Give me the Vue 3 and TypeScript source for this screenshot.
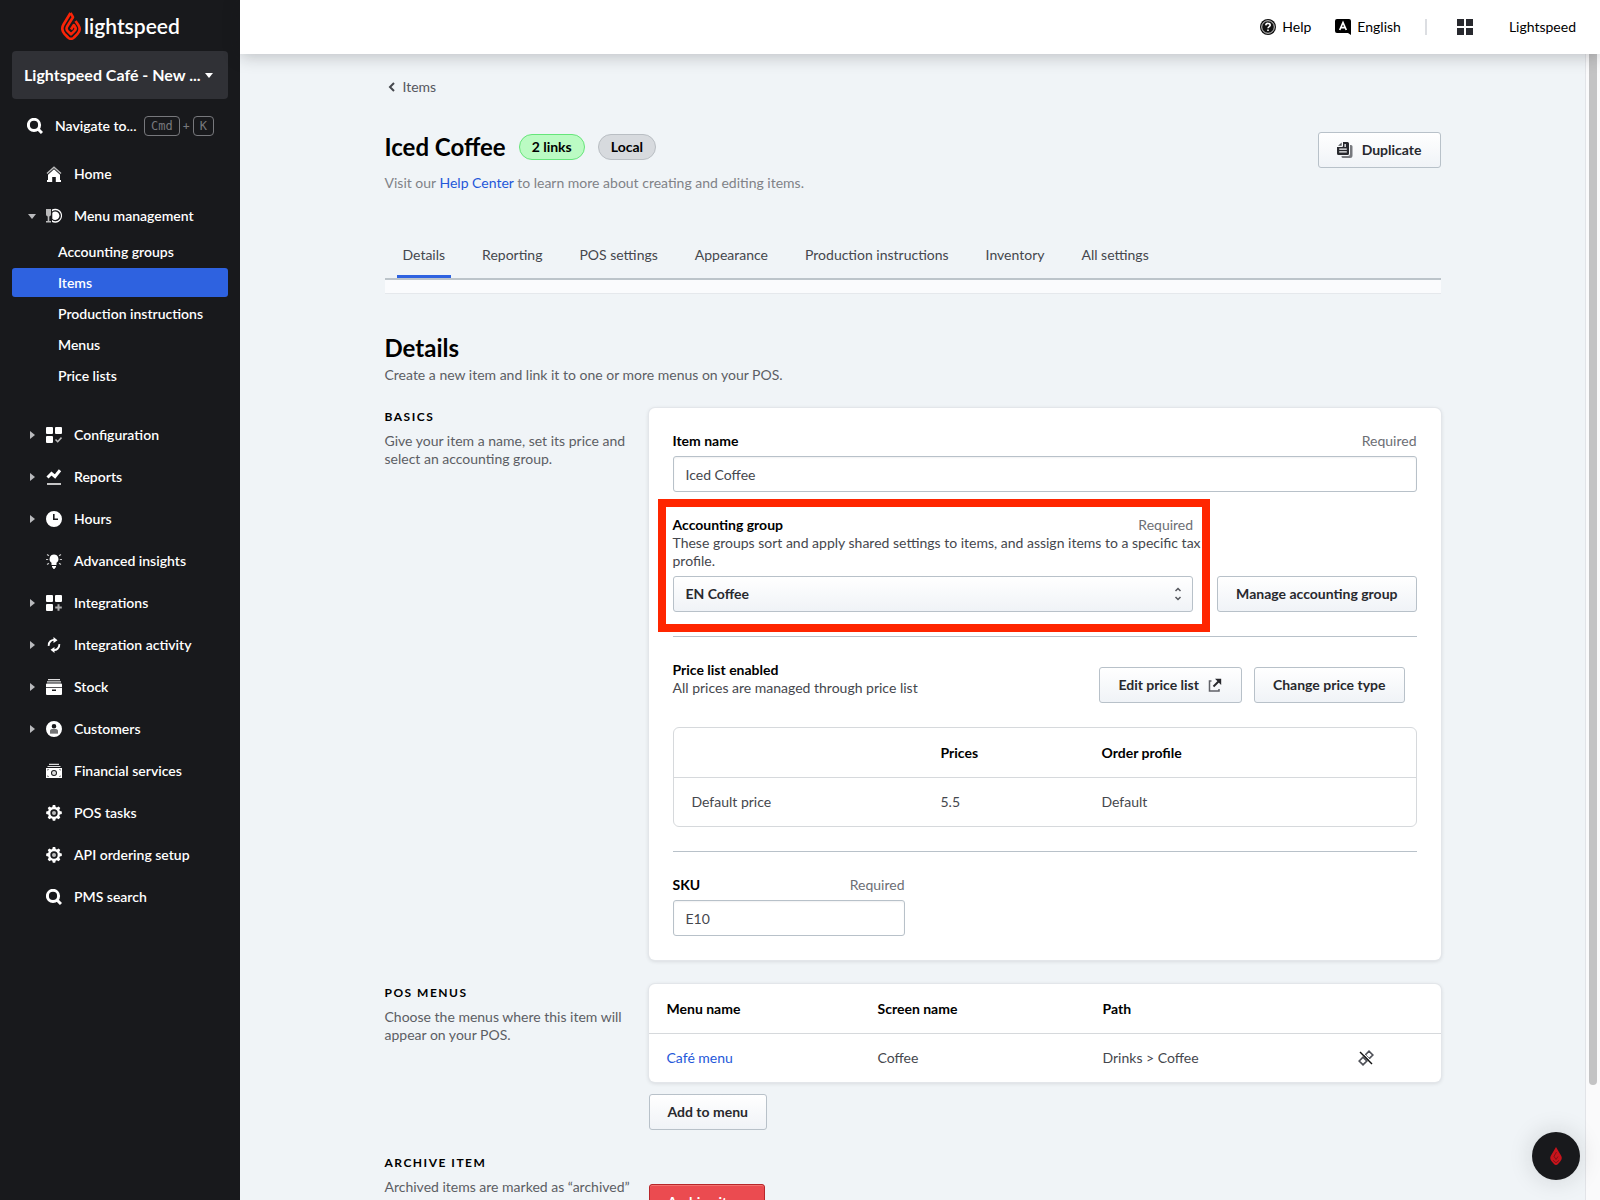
<script setup lang="ts">
import { ref } from 'vue'

interface Shape { d: string; o?: number; s?: number }
interface NavItem { label: string; icon: string; arrow?: 'open' | 'closed'; children?: string[] }

const gear = 'M6.8 0h2.4l.5 1.9 1.2.5 1.7-1 1.7 1.7-1 1.7.5 1.2 2 .6v2.4l-2 .5-.5 1.3 1 1.7-1.7 1.7-1.7-1-1.2.5-.5 2H6.800l-.5-2-1.200-.5-1.700 1-1.700-1.700 1-1.700-.5-1.300-2-.5V6.600l2-.6.5-1.200-1-1.700 1.700-1.700 1.700 1 1.200-.5zM8 4.300a3.700 3.700 0 1 0 0 7.400 3.700 3.700 0 0 0 0-7.400z'
const tiles = 'M1 0h5a1 1 0 0 1 1 1v5a1 1 0 0 1-1 1H1a1 1 0 0 1-1-1V1a1 1 0 0 1 1-1zM10 0h5a1 1 0 0 1 1 1v5a1 1 0 0 1-1 1h-5a1 1 0 0 1-1-1V1a1 1 0 0 1 1-1zM1 9h5a1 1 0 0 1 1 1v5a1 1 0 0 1-1 1H1a1 1 0 0 1-1-1v-5a1 1 0 0 1 1-1z'

const icons: Record<string, Shape[]> = {
  search: [{ d: 'M7 1.300a5.600 5.600 0 1 0 0 11.200A5.600 5.600 0 0 0 7 1.300zM11 11l4 4', s: 3 }],
  home: [
    { d: 'M1 7.500 8 1.200l7 6.300', s: 1.500, o: 0.7 },
    { d: 'M8 3.200 14 8.800V14h1v2H9.800v-5H6.200v5H1v-2h1V8.800z' },
  ],
  menu: [
    { d: 'M0 1h5v5.500a2 2 0 0 1-1.700 2V13H5v1.500H0V13h1.700V8.500A2 2 0 0 1 0 6.500z', o: 0.7 },
    { d: 'M6 1.400A7 7 0 1 1 6 14v-2a5.500 5.500 0 1 0 0-8.600z' },
    { d: 'M9.300 3.500a4.200 4.200 0 1 1-3 7.200V4.800a4.200 4.200 0 0 1 3-1.300z' },
  ],
  config: [{ d: tiles }, { d: 'M9.500 12.500l2.200 2.200 3.800-4.200', s: 1.600, o: 0.7 }],
  reports: [{ d: 'M1.500 8.500 5.500 4.500 9 7.500 14 1.200', s: 3 }, { d: 'M1 14h14v2H1z', o: 0.75 }],
  clock: [{ d: 'M8 0a8 8 0 1 1 0 16A8 8 0 0 1 8 0zM7 3v6h5V7.500H8.600V3z' }],
  bulb: [
    { d: 'M8 1.500a4.500 4.500 0 0 1 2.500 8.200V12h-5V9.700A4.500 4.500 0 0 1 8 1.500zM6 13h4v1.500H9.300L8.500 16h-1l-.8-1.500H6z' },
    { d: 'M0 6.500h2.200M13.800 6.500H16M1 1.500l2 1.300M15 1.500l-2 1.300M1 11.500l2-1.300M15 11.500l-2-1.300', s: 1.200, o: 0.75 },
  ],
  plus: [{ d: tiles }, { d: 'M12.500 9.200v6.600M9.200 12.500h6.600', s: 2, o: 0.65 }],
  sync: [
    { d: 'M2.700 8.800A5.300 5.300 0 0 1 9 3M13.300 7.200A5.300 5.300 0 0 1 7 13', s: 1.900 },
    { d: 'M7.500 0 11.500 3.200 7.500 6zM8.500 10 4.500 12.800 8.500 16z' },
  ],
  stock: [
    { d: 'M2 0h12v1.200H2zM1 2.200h14v1.200H1z', o: 0.85 },
    { d: 'M1 4.400h14a1 1 0 0 1 1 1V8H0V5.400a1 1 0 0 1 1-1zM0 8.700h16V15a1 1 0 0 1-1 1H1a1 1 0 0 1-1-1zM6 10.500V12h4v-1.500z' },
  ],
  customer: [
    { d: 'M8 0a8 8 0 1 1 0 16A8 8 0 0 1 8 0zM8 3a2.300 2.300 0 1 0 0 4.600A2.300 2.300 0 0 0 8 3zM4 12.500h8V10.500A2.500 2.500 0 0 0 9.500 8h-3A2.500 2.500 0 0 0 4 10.500z' },
    { d: 'M4 12.500h8V10.500A2.500 2.500 0 0 0 9.500 8h-3A2.500 2.500 0 0 0 4 10.500z', o: 0.4 },
  ],
  money: [
    { d: 'M3 .8h10V2H3zM1.500 3h13v1H1.500z', o: 0.85 },
    { d: 'M0 5h16v10H0zM8 7a3 3 0 1 0 0 6 3 3 0 0 0 0-6zM1.500 6.300v1.500L3 6.300zM14.500 6.300v1.500L13 6.300zM1.500 13.700v-1.500L3 13.700zM14.500 13.700v-1.500L13 13.700z' },
    { d: 'M8 8a2 2 0 1 0 0 4 2 2 0 0 0 0-4z', o: 0.85 },
  ],
  gear: [{ d: gear }, { d: 'M8 6a2 2 0 1 0 0 4 2 2 0 0 0 0-4z', o: 0.7 }],
}

const nav: NavItem[] = [
  { label: 'Home', icon: 'home' },
  { label: 'Menu management', icon: 'menu', arrow: 'open', children: ['Accounting groups', 'Items', 'Production instructions', 'Menus', 'Price lists'] },
  { label: 'Configuration', icon: 'config', arrow: 'closed' },
  { label: 'Reports', icon: 'reports', arrow: 'closed' },
  { label: 'Hours', icon: 'clock', arrow: 'closed' },
  { label: 'Advanced insights', icon: 'bulb' },
  { label: 'Integrations', icon: 'plus', arrow: 'closed' },
  { label: 'Integration activity', icon: 'sync', arrow: 'closed' },
  { label: 'Stock', icon: 'stock', arrow: 'closed' },
  { label: 'Customers', icon: 'customer', arrow: 'closed' },
  { label: 'Financial services', icon: 'money' },
  { label: 'POS tasks', icon: 'gear' },
  { label: 'API ordering setup', icon: 'gear' },
  { label: 'PMS search', icon: 'search' },
]

const tabs = ['Details', 'Reporting', 'POS settings', 'Appearance', 'Production instructions', 'Inventory', 'All settings']
const activeTab = ref('Details')
const itemName = ref('Iced Coffee')
const group = ref('EN Coffee')
const sku = ref('E10')
</script>

<template>
  <div class="app">
    <aside class="sidebar">
      <a href="#" class="logo">
        <svg class="flame" viewBox="0 0 20 28" aria-hidden="true">
          <path d="M9.500 1 2.500 12.500a8 8 0 0 0 1 9.300l3.500 3.700a4 4 0 0 0 6 0l3.500-3.700a7 7 0 0 0 1-8.500L14.500 9" />
          <path d="M9.500 1 12 5.200 6 14.800a3.500 3.500 0 0 0 .5 4L10 22.300l3.500-3.500a3 3 0 0 0 .5-4L12.800 13 10 17.500" />
        </svg>
        <span>lightspeed</span>
      </a>
      <button class="store"><span>Lightspeed Café - New ...</span><i class="caret down"></i></button>
      <a href="#" class="quick">
        <svg class="ico" viewBox="0 0 16 16"><path v-for="(p, i) in icons.search" :key="i" :d="p.d" class="line" :stroke-width="p.s" /></svg>
        <span class="quick-label">Navigate to...</span>
        <kbd>Cmd</kbd><span class="join">+</span><kbd>K</kbd>
      </a>
      <nav>
        <template v-for="item in nav" :key="item.label">
          <a href="#" class="nav-item">
            <span class="arrow"><i v-if="item.arrow" class="caret" :class="item.arrow === 'open' ? 'down dim' : 'side'"></i></span>
            <svg class="ico" viewBox="0 0 16 16">
              <path
                v-for="(p, i) in icons[item.icon]"
                :key="i"
                :d="p.d"
                :class="p.s ? 'line' : 'solid'"
                :stroke-width="p.s"
                :opacity="p.o"
              />
            </svg>
            <span>{{ item.label }}</span>
          </a>
          <div v-if="item.children" class="sub">
            <a v-for="c in item.children" :key="c" href="#" :class="{ active: c === 'Items' }">{{ c }}</a>
          </div>
        </template>
      </nav>
    </aside>

    <div class="main">
      <header class="topbar">
        <a href="#" class="top-link">
          <svg class="ico" viewBox="0 0 16 16">
            <circle cx="8" cy="8" r="8" fill="#111" />
            <circle cx="8" cy="8" r="6.300" fill="none" stroke="#fff" stroke-width=".8" />
            <path d="M5.800 6.300A2.100 2.100 0 0 1 8 4.400c1.300 0 2.200.7 2.200 1.800C10.200 7.600 8 7.600 8 9.300M8 10.400v1.700" fill="none" stroke="#fff" stroke-width="1.600" />
          </svg>
          Help
        </a>
        <a href="#" class="top-link lang">
          <svg class="ico" viewBox="0 0 16 16">
            <path d="M2 0h12a2 2 0 0 1 2 2v14l-3-2H2a2 2 0 0 1-2-2V2a2 2 0 0 1 2-2z" fill="#000" />
            <path d="M4.700 11 8 3.500 11.300 11M5.800 8.700h4.400" fill="none" stroke="#fff" stroke-width="1.700" />
          </svg>
          English
        </a>
        <span class="rule"></span>
        <button class="apps" aria-label="Apps">
          <svg class="ico" viewBox="0 0 16 16"><path d="M0 0h7v7H0zM9 0h7v7H9zM0 9h7v7H0zM9 9h7v7H9z" fill="#28292e" /></svg>
        </button>
        <a href="#" class="top-link">Lightspeed</a>
      </header>

      <div class="scroller">
        <main class="content">
          <div class="page">
            <a href="#" class="back">
              <svg viewBox="0 0 8 10"><path d="M6 1 2 5l4 4" /></svg>Items
            </a>
            <div class="head">
              <div>
                <div class="title">
                  <h1>Iced Coffee</h1>
                  <span class="badge green">2 links</span>
                  <span class="badge">Local</span>
                </div>
                <p class="intro">Visit our <a href="#">Help Center</a> to learn more about creating and editing items.</p>
              </div>
              <button class="btn">
                <svg class="ico" viewBox="0 0 16 16">
                  <path d="M12 3h2a1.500 1.500 0 0 1 1.500 1.500v9A2.500 2.500 0 0 1 13 16H6a1.500 1.500 0 0 1-1.500-1.500V14H11a2 2 0 0 0 2-2V3z" fill="#77797e" />
                  <path d="M6 0h4.500A1.500 1.500 0 0 1 12 1.500v10a1.500 1.500 0 0 1-1.500 1.500h-9A1.500 1.500 0 0 1 0 11.500V5h5a1 1 0 0 0 1-1zM7.500 2v3h1.300V2zM2.200 6.600v1.200h7.600V6.600zM2.200 9.300v1.200h7.600V9.300z" fill="#28292e" fill-rule="evenodd" />
                  <path d="M4.700.5V3.700H1z" fill="#55575c" />
                </svg>
                Duplicate
              </button>
            </div>

            <div class="tabs" role="tablist">
              <button v-for="t in tabs" :key="t" role="tab" :aria-selected="t === activeTab" :class="{ on: t === activeTab }" @click="activeTab = t">{{ t }}</button>
            </div>
            <div class="strip"></div>

            <h2>Details</h2>
            <p class="lead">Create a new item and link it to one or more menus on your POS.</p>

            <section class="row">
              <div class="side-text">
                <h3>Basics</h3>
                <p>Give your item a name, set its price and select an accounting group.</p>
              </div>
              <div class="card body">
                <div class="label-row"><label for="name">Item name</label><span>Required</span></div>
                <input id="name" v-model="itemName" type="text" />

                <div class="group-row">
                  <div class="group">
                    <div class="label-row tight"><label for="group">Accounting group</label><span>Required</span></div>
                    <p class="help">These groups sort and apply shared settings to items, and assign items to a specific tax profile.</p>
                    <div class="select">
                      <select id="group" v-model="group"><option>EN Coffee</option></select>
                      <svg viewBox="0 0 8 14"><path d="M1.500 4 4 1.500 6.500 4M1.500 10 4 12.500 6.500 10" /></svg>
                    </div>
                    <div class="marker"></div>
                  </div>
                  <button class="btn">Manage accounting group</button>
                </div>

                <hr />
                <div class="price-head">
                  <div>
                    <strong>Price list enabled</strong>
                    <p class="help">All prices are managed through price list</p>
                  </div>
                  <div class="actions">
                    <button class="btn">
                      Edit price list
                      <svg class="ext" viewBox="0 0 15 14">
                        <path d="M3.500 3H1.500v10H11v-2" stroke="#606268" stroke-width="1.500" fill="none" />
                        <path d="M5.500 8.500 11 3" stroke="#28292e" stroke-width="2" fill="none" />
                        <path d="M7 .8H13.200V7z" fill="#28292e" />
                      </svg>
                    </button>
                    <button class="btn">Change price type</button>
                  </div>
                </div>
                <div class="table-box">
                  <table class="prices">
                    <thead><tr><th></th><th>Prices</th><th>Order profile</th></tr></thead>
                    <tbody><tr><td>Default price</td><td>5.5</td><td>Default</td></tr></tbody>
                  </table>
                </div>
                <hr />
                <div class="sku">
                  <div class="label-row"><label for="sku">SKU</label><span>Required</span></div>
                  <input id="sku" v-model="sku" type="text" />
                </div>
              </div>
            </section>

            <section class="row">
              <div class="side-text">
                <h3>POS menus</h3>
                <p>Choose the menus where this item will appear on your POS.</p>
              </div>
              <div>
                <div class="card">
                  <table class="menus">
                    <thead><tr><th>Menu name</th><th>Screen name</th><th>Path</th><th></th></tr></thead>
                    <tbody>
                      <tr>
                        <td><a href="#">Café menu</a></td>
                        <td>Coffee</td>
                        <td>Drinks &gt; Coffee</td>
                        <td>
                          <button class="unlink" aria-label="Unlink">
                            <svg class="ico" viewBox="0 0 16 16">
                              <path d="M7.200 5 11 1.200 14.800 5 11 8.800zM1.200 11 5 7.200 8.800 11 5 14.800z" fill="none" stroke="#505259" stroke-width="1.700" />
                              <path d="M3.500 1.500 15 13" stroke="#fff" stroke-width="1" />
                              <path d="M2 2 14 14" stroke="#111" stroke-width="1.400" />
                            </svg>
                          </button>
                        </td>
                      </tr>
                    </tbody>
                  </table>
                </div>
                <button class="btn add">Add to menu</button>
              </div>
            </section>

            <section class="row">
              <div class="side-text">
                <h3>Archive item</h3>
                <p>Archived items are marked as “archived” in the item list and removed from menus.</p>
              </div>
              <div class="archive"><button class="btn danger">Archive item</button></div>
            </section>
          </div>
        </main>
        <div class="track"><div class="thumb"></div></div>
        <button class="fab" aria-label="Lightspeed">
          <svg viewBox="0 0 12 18">
            <path d="M6 0 11 8.500a5 5 0 0 1-.8 6L8 17a2.800 2.800 0 0 1-4 0L1.800 14.500a5 5 0 0 1-.8-6z" fill="#c8141c" />
            <path d="M6.500 5 4 9.300 6 12.500 8 9.500M3 13.300 6 15.800 9 13.300" fill="none" stroke="#5e1216" stroke-width=".7" />
          </svg>
        </button>
      </div>
    </div>
  </div>
</template>

<style>
body { margin: 0; background: #f0f4f7; }
</style>

<style scoped>
* { box-sizing: border-box; }
.app {
  display: grid;
  grid-template-columns: 240px minmax(0, 1fr);
  grid-template-rows: minmax(0, 1fr);
  height: 100vh;
  overflow: hidden;
  font: 400 14px/18px Lato, "Liberation Sans", sans-serif;
  color: #45474d;
}
a { color: #2357d9; text-decoration: none; }
button, input, select { font: inherit; color: inherit; margin: 0; }
button { border: 0; padding: 0; background: none; cursor: pointer; }
h1, h2, h3, p { margin: 0; }
.ico { width: 16px; height: 16px; flex: none; display: block; }

.sidebar { background: #18191c; color: #fff; padding: 0 12px; font-weight: 600; }
.sidebar a { color: #fff; }
.sidebar .logo { display: flex; align-items: center; gap: 3px; height: 51px; padding-left: 49px; font: 600 21px/26px Lato, sans-serif; }
.flame { width: 20px; height: 28px; }
.flame path { fill: none; stroke: #fa2408; stroke-width: 2.600; stroke-linejoin: round; }
.store { display: flex; align-items: center; justify-content: space-between; width: 100%; height: 48px; padding: 0 15px 0 12px; border-radius: 4px; background: #303136; color: #fff; font-size: 16px; font-weight: 700; }
.caret { display: block; width: 0; height: 0; border: solid transparent; }
.caret.down { border-width: 5px 4px 0; border-top-color: #fff; }
.caret.dim { border-top-color: #b9babd; }
.caret.side { margin-left: 2px; border-width: 4px 0 4px 5px; border-left-color: #b9babd; }
.quick { display: flex; align-items: center; height: 54px; padding-left: 15px; }
.quick-label { width: 89px; margin-left: 12px; }
kbd { height: 20px; padding: 0 6px; border: 1px solid #77787c; border-radius: 4px; font: 12px/18px "DejaVu Sans Mono", monospace; color: #77787c; }
.join { margin: 0 3px; color: #77787c; font-size: 12px; }
.nav-item { display: flex; align-items: center; height: 42px; }
.arrow { width: 34px; padding-left: 16px; }
.solid { fill: #fff; fill-rule: evenodd; }
.line { fill: none; stroke: #fff; }
.nav-item > span:last-child { margin-left: 12px; }
.sub { display: flex; flex-direction: column; gap: 2px; padding-bottom: 24px; }
.sub a { height: 29px; padding-left: 46px; line-height: 29px; border-radius: 3px; }
.sub a.active { background: #2e62e0; }

.main { display: grid; grid-template-rows: 54px minmax(0, 1fr); min-width: 0; }
.topbar { position: relative; z-index: 1; display: flex; align-items: center; justify-content: flex-end; padding-right: 24px; background: #fff; box-shadow: 0 2px 16px rgba(24, 25, 28, .25); }
.top-link { display: flex; align-items: center; gap: 6px; color: #000; }
.lang { margin-left: 24px; }
.rule { width: 2px; height: 16px; margin: 0 30px 0 24px; background: #dcdee2; }
.apps { margin-right: 36px; }

.scroller { position: relative; display: grid; grid-template-columns: minmax(0, 1fr) 15px; grid-template-rows: minmax(0, 1fr); background: #f0f4f7; overflow: hidden; }
.content { overflow: hidden; padding: 24px 48px 0; }
.page { max-width: 1056px; margin: 0 auto; }
.track { border-left: 1px solid #e2e4e8; background: #fafafb; padding: 0 3px; }
.thumb { height: 90%; border-radius: 0 0 4px 4px; background: #c3c3c4; }

.back { display: flex; align-items: center; gap: 7px; height: 18px; padding-left: 3px; color: #55575d; }
.back svg { width: 8px; height: 10px; }
.back path { fill: none; stroke: #45474d; stroke-width: 2; }
.head { display: flex; justify-content: space-between; align-items: flex-start; margin-top: 36px; }
.title { display: flex; align-items: center; gap: 13px; height: 30px; }
h1, h2 { font-size: 24px; line-height: 30px; font-weight: 700; color: #000; }
.badge { height: 26px; padding: 0 12px; border: 1px solid #b9bec3; border-radius: 13px; background: #d7dade; font-weight: 700; line-height: 24px; color: #000; }
.badge.green { border-color: #66e57a; background: #bbfbc3; }
.intro { margin-top: 12px; color: #808287; }

.btn { display: inline-flex; align-items: center; justify-content: center; gap: 9px; height: 36px; padding: 0 18px; border: 1px solid #b8c1c9; border-radius: 3px; background: linear-gradient(#fff, #f0f3f7); color: #28292e; font-weight: 700; white-space: nowrap; }

.tabs { display: flex; gap: 25px; margin-top: 46px; padding: 0 12px; border-bottom: 2px solid #bcc4ca; }
.tabs button { height: 40px; padding: 0 6px 4px; border-bottom: 3px solid transparent; }
.tabs .on { border-bottom-color: #2e62e0; }
.strip { height: 14px; background: #fafbfd; border-bottom: 1px solid #e5e8ec; }

h2 { margin-top: 39px; }
.lead { margin-top: 3px; color: #5c5e64; }
.row { display: grid; grid-template-columns: 252px minmax(0, 1fr); column-gap: 12px; margin-top: 24px; }
.side-text { color: #5c5e64; }
h3 { margin-bottom: 6px; font-size: 12px; line-height: 18px; font-weight: 700; letter-spacing: 1.500px; text-transform: uppercase; color: #000; }

.card { background: #fff; border-radius: 6px; box-shadow: 0 0 0 1px #e3e6ea, 0 1px 4px rgba(24, 25, 28, .16); }
.body { padding: 24px; }
.label-row { display: flex; justify-content: space-between; margin-bottom: 6px; }
.label-row.tight { margin-bottom: 0; }
label, strong { font-weight: 700; color: #000; }
.label-row span { color: #6c6e74; }
input { display: block; width: 100%; height: 36px; padding: 0 12px; border: 1px solid #b8c1c9; border-radius: 3px; background: #fff; box-shadow: inset 0 1px 2px rgba(24, 25, 28, .06); outline: 0; }
.group-row { display: flex; align-items: flex-end; gap: 24px; margin-top: 24px; }
.group { position: relative; flex: 1; }
.group .help { margin: 0 -9px 6px 0; }
.select { position: relative; }
select { display: block; width: 100%; height: 36px; padding: 0 12px; appearance: none; border: 1px solid #b8c1c9; border-radius: 3px; background: linear-gradient(#fff, #f0f3f7); color: #28292e; font-weight: 700; }
.select svg { position: absolute; right: 11px; top: 11px; width: 8px; height: 14px; pointer-events: none; }
.select path { fill: none; stroke: #55575d; stroke-width: 1.500; }
.marker { position: absolute; inset: -17px -17px -20px -15px; border: 8px solid #ff2600; pointer-events: none; }
hr { height: 1px; margin: 24px 0; border: 0; background: #b8c1c9; }
.price-head { display: flex; justify-content: space-between; padding: 0 12px 24px 0; }
.actions { display: flex; gap: 12px; padding-top: 6px; }
.ext { width: 15px; height: 14px; }
.sku { width: 232px; }

.table-box { border: 1px solid #d6d9dc; border-radius: 6px; }
table { width: 100%; table-layout: fixed; border-collapse: separate; border-spacing: 0; text-align: left; }
th { height: 50px; padding: 0; font-weight: 700; color: #000; border-bottom: 1px solid #d6d9dc; }
td { height: 48px; padding: 0; }
th:first-child, td:first-child { padding-left: 18px; }
.prices th:nth-child(1) { width: 267px; }
.prices th:nth-child(2) { width: 161px; }
.menus th:nth-child(1) { width: 229px; }
.menus th:nth-child(2) { width: 225px; }
.menus th:nth-child(3) { width: 255px; }
.unlink { display: block; }
.add { margin-top: 12px; }
.archive { padding-top: 30px; }
.danger { border-color: #b8262b; background: #eb4b50; color: #fff; box-shadow: inset 0 1px #f2736f; }

.fab { position: absolute; right: 20px; bottom: 20px; display: grid; place-items: center; width: 48px; height: 48px; border-radius: 50%; background: #18191c; box-shadow: 0 0 24px rgba(24, 25, 28, .15); }
.fab svg { width: 12px; height: 18px; }
</style>
